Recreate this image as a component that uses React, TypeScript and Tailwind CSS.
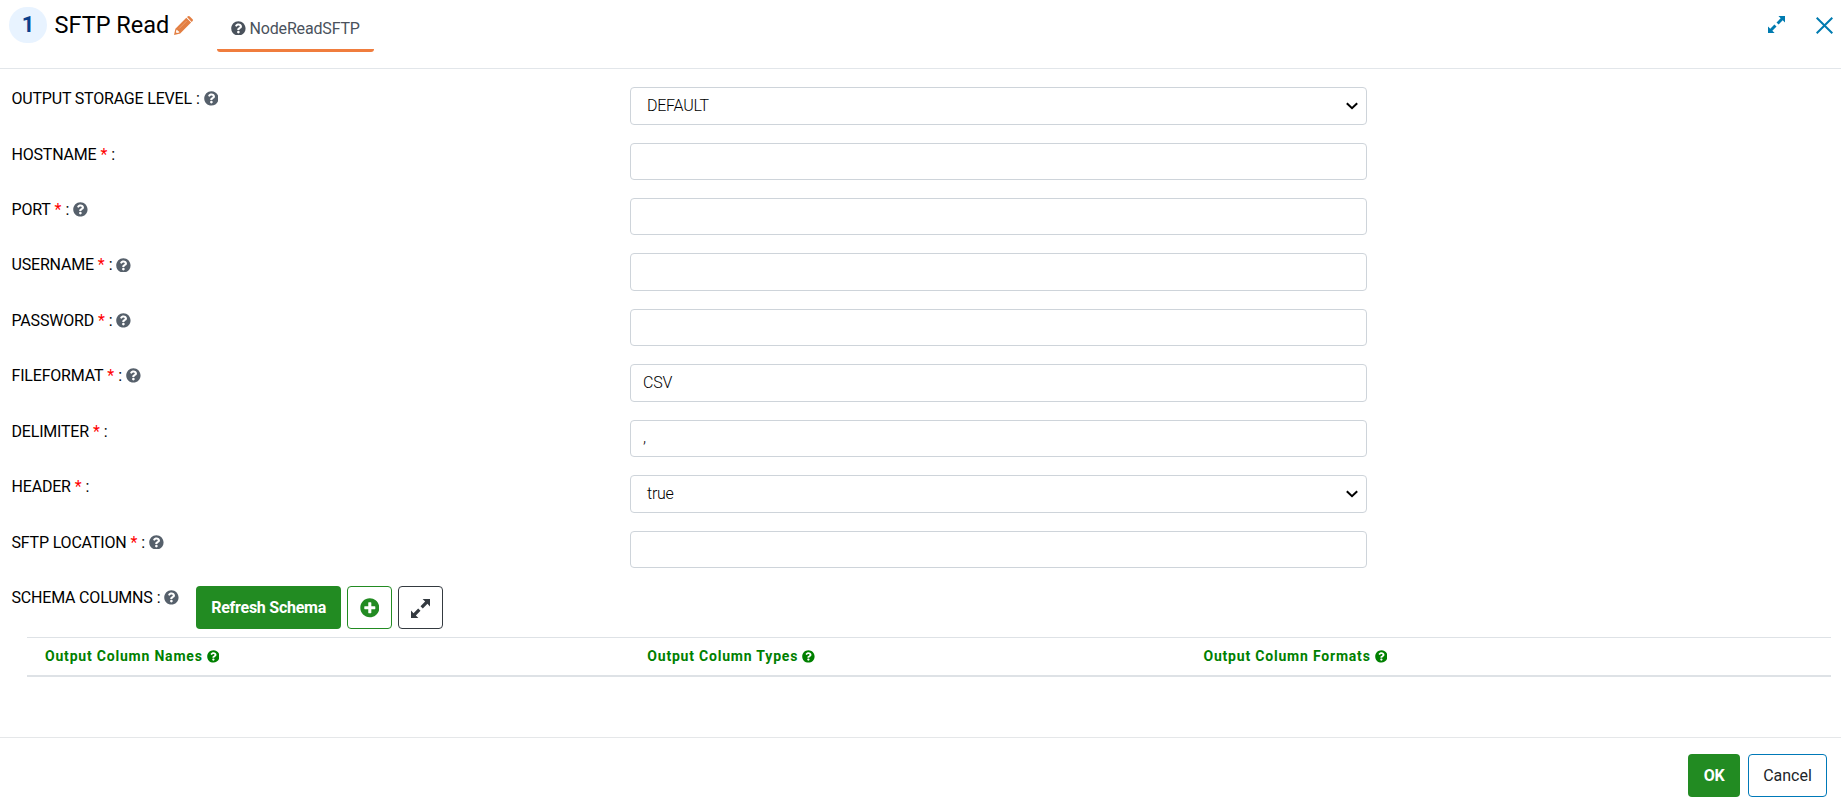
import React from "react";
import { FaQuestionCircle, FaPlusCircle } from "react-icons/fa";

function ResizeIcon({ className }: { className: string }) {
  return (
    <svg viewBox="0 0 18 18" fill="currentColor" className={className} aria-hidden="true">
      <path d="M11 0H18V7L15.6 4.6 11.2 9 9 6.8 13.4 2.4z" />
      <path d="M7 18H0V11L2.4 13.4 6.8 9 9 11.2 4.6 15.6z" />
    </svg>
  );
}

function PencilIcon({ className }: { className: string }) {
  return (
    <svg viewBox="0 0 19 19" fill="currentColor" className={className} aria-hidden="true">
      <path d="M13 1.1 14 .3Q14.9-.3 15.8.4L18.6 3.2Q19.3 4.1 18.6 5L17.7 6z" />
      <path d="M12.3 1.8 17.1 6.6 6.2 17.5 0 19 1.4 12.7zM2.5 13.7 1.9 16.2 2.9 17.1 5.3 16.5 5 15.3 3.7 15.2 3.6 13.9z" fillRule="evenodd" />
      <path d="M5.2 12.5 12.6 5.1" stroke="#f3bd9c" strokeWidth=".5" />
    </svg>
  );
}

type Field = {
  label: string;
  required?: boolean;
  help?: boolean;
  value?: string;
  select?: boolean;
};

const fields: Field[] = [
  { label: "OUTPUT STORAGE LEVEL", help: true, value: "DEFAULT", select: true },
  { label: "HOSTNAME", required: true },
  { label: "PORT", required: true, help: true },
  { label: "USERNAME", required: true, help: true },
  { label: "PASSWORD", required: true, help: true },
  { label: "FILEFORMAT", required: true, help: true, value: "CSV" },
  { label: "DELIMITER", required: true, value: "," },
  { label: "HEADER", required: true, value: "true", select: true },
  { label: "SFTP LOCATION", required: true, help: true },
];

function Label({ label, required, help }: Field) {
  return (
    <div className="flex h-6 items-center whitespace-pre text-black">
      <span>
        <span className="tracking-[-0.19px]">{label}</span>
        {required && <span className="text-[#ff0000]"> *</span>}
        {" : "}
      </span>
      {help && <FaQuestionCircle className="-mt-px -ml-[0.2px] size-[14.8px] text-[#56606b]" />}
    </div>
  );
}

function Row(field: Field) {
  return (
    <div className="flex h-[55.44px] items-start">
      <div className="w-[618.5px] shrink-0">
        <Label {...field} />
      </div>
      <div className="flex h-[37.45px] w-[737px] items-center justify-between rounded-[4px] border border-[#ced4da] bg-white font-light tracking-[-0.25px] text-black">
        <span className={field.select ? "pl-4" : "pl-3"}>{field.value}</span>
        {field.select && (
          <svg viewBox="0 0 12 8" className="mt-px mr-2 h-2 w-3" fill="none" stroke="#000" strokeWidth="2">
            <path d="M0.8 1.2 6 6.2l5.2-5" />
          </svg>
        )}
      </div>
    </div>
  );
}

const columns = [
  { name: "Output Column Names", width: "w-[602.3px]" },
  { name: "Output Column Types", width: "w-[556.2px]" },
  { name: "Output Column Formats", width: "w-[610px]" },
];

export default function App() {
  return (
    <div className="flex h-[807px] w-full flex-col overflow-hidden bg-white font-['Roboto',sans-serif] text-[16px] leading-6">
      <header className="flex h-[69px] shrink-0 items-start border-b border-[#e2e6ea] pl-[9px]">
        <div className="mt-[7px] flex h-9 w-[38px] items-center justify-center rounded-full bg-[#e8f3ff] text-[22px] font-bold text-[#0a3f8c]">
          1
        </div>
        <h1 className="mt-[9px] ml-[7.5px] w-[115px] text-[23.5px] leading-8 whitespace-nowrap text-black">SFTP Read</h1>
        <PencilIcon className="mt-4 ml-[4.5px] size-[19px] text-[#e37f43]" />
        <div className="ml-6 flex h-[52px] w-[157px] items-center justify-center gap-[3.5px] rounded-[3px] border-b-[3px] border-[#f07d3e] pt-[8px] text-[#4a525c]">
          <FaQuestionCircle className="-mt-px size-[14.8px]" />
          <span className="tracking-[-0.16px]">NodeReadSFTP</span>
        </div>
        <div className="mt-4 mr-[8.5px] ml-auto flex gap-[30.5px] text-[#007bb0]">
          <ResizeIcon className="size-[17px]" />
          <svg viewBox="0 0 17 17" className="mt-px size-[17px]" stroke="currentColor" strokeWidth="2">
            <path d="M.7.7l15.6 15.6M16.3.7.7 16.3" />
          </svg>
        </div>
      </header>

      <main className="flex flex-1 flex-col pt-[18.1px] pl-[11.5px]">
        {fields.map((field) => (
          <Row key={field.label} {...field} />
        ))}
        <div className="flex h-[50.7px] items-start">
          <Label label="SCHEMA COLUMNS" help />
          <button className="ml-[17px] h-[43px] w-[145px] rounded-[4px] bg-[#228b22] pt-px font-bold tracking-[-0.25px] text-white">
            Refresh Schema
          </button>
          <button className="ml-[6px] flex h-[43px] w-[45px] items-center justify-center rounded-[4px] border border-[#228b22] text-[#228b22]">
            <FaPlusCircle className="mt-px size-[19.6px]" />
          </button>
          <button className="ml-[6px] flex h-[43px] w-[45px] items-center justify-center rounded-[4px] border border-[#343a40] text-[#343a40]">
            <ResizeIcon className="mt-px size-[19px]" />
          </button>
        </div>
        <div className="mr-[10px] ml-[15.5px] flex h-10 items-center border-t border-b-2 border-t-[#dee2e6] border-b-[#dee2e6] pl-[18px] text-[14px] font-bold tracking-[0.8px] text-[#008000]">
          {columns.map((column) => (
            <div key={column.name} className={`flex items-center gap-1 ${column.width}`}>
              {column.name}
              <FaQuestionCircle className="size-[12.8px]" />
            </div>
          ))}
        </div>
      </main>

      <footer className="flex h-[70px] shrink-0 justify-end gap-2 border-t border-[#e5e7e9] pt-4 pr-[14px]">
        <button className="h-[43px] w-[52px] rounded-[4px] bg-[#228b22] font-bold tracking-[-0.3px] text-white">OK</button>
        <button className="h-[43px] w-[79px] rounded-[4px] border border-[#0079b8] text-[#212529]">Cancel</button>
      </footer>
    </div>
  );
}
